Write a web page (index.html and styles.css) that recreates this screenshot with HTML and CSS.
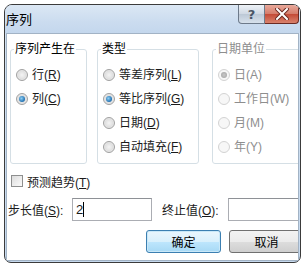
FILE: index.html
```html
<!DOCTYPE html>
<html lang="zh-CN">
<head>
    <meta charset="UTF-8">
    <title>序列</title>
    <link rel="stylesheet" href="styles.css">
</head>
<body>
    <div class="window">
        <div class="titlebar">
            <div class="title">序列</div>
            <div class="caption-buttons">
                <div class="caption help">?</div>
                <div class="caption close">
                    <svg width="14" height="12" viewBox="0 0 14 12">
                        <path d="M2 1 L12 11 M12 1 L2 11" stroke="#6b2a22" stroke-width="4" stroke-linecap="square"/>
                        <path d="M2 1 L12 11 M12 1 L2 11" stroke="#fff" stroke-width="2" stroke-linecap="square"/>
                    </svg>
                </div>
            </div>
        </div>
        <div class="content">
            <div class="groups">
                <fieldset class="group group-source">
                    <legend>序列产生在</legend>
                    <label class="option"><span class="radio"></span><span>行(<u>R</u>)</span></label>
                    <label class="option"><span class="radio checked"></span><span>列(<u>C</u>)</span></label>
                </fieldset>
                <fieldset class="group group-type">
                    <legend>类型</legend>
                    <label class="option"><span class="radio"></span><span>等差序列(<u>L</u>)</span></label>
                    <label class="option"><span class="radio checked"></span><span>等比序列(<u>G</u>)</span></label>
                    <label class="option"><span class="radio"></span><span>日期(<u>D</u>)</span></label>
                    <label class="option"><span class="radio"></span><span>自动填充(<u>F</u>)</span></label>
                </fieldset>
                <fieldset class="group group-date disabled">
                    <legend>日期单位</legend>
                    <label class="option"><span class="radio checked"></span><span>日(A)</span></label>
                    <label class="option"><span class="radio"></span><span>工作日(W)</span></label>
                    <label class="option"><span class="radio"></span><span>月(M)</span></label>
                    <label class="option"><span class="radio"></span><span>年(Y)</span></label>
                </fieldset>
            </div>
            <label class="trend"><span class="checkbox"></span><span>预测趋势(<u>T</u>)</span></label>
            <div class="values">
                <span class="field-label">步长值(<u>S</u>):</span>
                <div class="input step"><span>2</span><span class="caret"></span></div>
                <span class="field-label end-label">终止值(<u>O</u>):</span>
                <div class="input stop"></div>
            </div>
            <div class="actions">
                <button class="btn default">确定</button>
                <button class="btn">取消</button>
            </div>
        </div>
    </div>
</body>
</html>
```

FILE: styles.css
```css
body {
    margin: 0;
    background-color: #fff;
    font-family: "Liberation Sans", "Noto Sans CJK SC", sans-serif;
    font-size: 12px;
    color: #1a1a1a;
}

.window {
    box-sizing: border-box;
    width: 297px;
    height: 259px;
    margin: 4px 0 0 4px;
    border: 1px solid #3b3b3b;
    border-radius: 8px 8px 7px 7px;
    background: linear-gradient(to bottom, #d3e2f2, #c6d9ee);
    overflow: hidden;
    display: flex;
    flex-direction: column;
}

.titlebar {
    height: 28px;
    display: flex;
    background: linear-gradient(to bottom, #dbe7f4 0%, #cbdcef 60%, #c4d7ed 100%);
}

.title {
    margin-left: 1px;
    padding-top: 6px;
    font-family: "Noto Sans CJK SC", sans-serif;
    font-size: 13px;
    line-height: 16px;
    color: #000;
}

.caption-buttons {
    margin-left: auto;
    margin-right: 1px;
    display: flex;
    align-self: flex-start;
}

.caption {
    box-sizing: border-box;
    height: 19px;
    display: flex;
    align-items: center;
    justify-content: center;
    border: 1px solid #6d7a8a;
    border-top: none;
}

.help {
    width: 27px;
    border-radius: 0 0 0 4px;
    background: linear-gradient(to bottom, #eef2f7, #cfd8e3 50%, #bcc8d6 51%, #d7e1ec);
    color: #4a5566;
    font-family: "DejaVu Sans", sans-serif;
    font-size: 13px;
    font-weight: bold;
}

.close {
    width: 34px;
    border-left: none;
    border-color: #6b2a22;
    border-radius: 0 0 4px 0;
    background: linear-gradient(to bottom, #e9a99b, #d47b69 50%, #c44a36 51%, #d9826c);
}

.content {
    flex: 1;
    margin: 0 1px 1px;
    background-color: #fff;
    border: 1px solid #a2b3c5;
    overflow: hidden;
}

.groups {
    display: flex;
    margin: 8px 0 0 3px;
}

.group {
    box-sizing: border-box;
    flex-shrink: 0;
    height: 122px;
    margin: 0;
    padding: 12px 0 0 5px;
    border: 1px solid #d5dfe5;
    border-radius: 3px;
    display: flex;
    flex-direction: column;
    gap: 10px;
}

.group legend {
    padding: 0 1px;
    margin-left: -2px;
    line-height: 14px;
    white-space: nowrap;
    color: #000;
}

.group-source {
    width: 77px;
}

.group-type {
    width: 102px;
    margin-left: 10px;
}

.group-date {
    width: 110px;
    margin-left: 13px;
}

.option {
    display: flex;
    align-items: center;
    gap: 4px;
    height: 14px;
    line-height: 14px;
    white-space: nowrap;
}

.disabled legend,
.disabled .option {
    color: #8e8e8e;
}

.radio {
    box-sizing: border-box;
    width: 12px;
    height: 12px;
    border-radius: 50%;
    border: 1px solid #a0a0a0;
    background: radial-gradient(circle at 50% 50%, #f4f4f4 0, #e0e0e0 55%, #fafafa 100%);
    position: relative;
}

.radio.checked::after {
    content: "";
    position: absolute;
    left: 2px;
    top: 2px;
    width: 6px;
    height: 6px;
    border-radius: 50%;
    background: radial-gradient(circle at 40% 40%, #8fd0f5, #1f6fb0 70%, #18518a);
}

.disabled .radio {
    border-color: #d3d3d3;
    background: #f7f7f7;
}

.disabled .radio.checked::after {
    background: radial-gradient(circle, #c8c8c8, #a0a0a0);
}

.trend {
    display: flex;
    align-items: center;
    gap: 4px;
    margin: 10px 0 0 4px;
    height: 14px;
}

.checkbox {
    box-sizing: border-box;
    width: 12px;
    height: 12px;
    border: 1px solid #8e8f8f;
    background: linear-gradient(135deg, #dcdcdc, #fbfbfb);
}

.values {
    display: flex;
    align-items: center;
    margin: 10px 0 0 1px;
    height: 23px;
}

.field-label {
    flex-shrink: 0;
    white-space: nowrap;
    width: 64px;
}

.input {
    box-sizing: border-box;
    flex-shrink: 0;
    width: 80px;
    height: 23px;
    border: 1px solid #abadb3;
    border-top-color: #8e9196;
    background-color: #fff;
    padding: 0 3px;
    font-family: "Liberation Sans", sans-serif;
    font-size: 13px;
    display: flex;
    align-items: center;
}

.caret {
    width: 1px;
    height: 15px;
    background-color: #000;
}

.end-label {
    width: 66px;
    margin-left: 10px;
}

.actions {
    display: flex;
    gap: 8px;
    margin: 9px 0 0 139px;
}

.btn {
    box-sizing: border-box;
    width: 75px;
    height: 23px;
    flex-shrink: 0;
    border: 1px solid #707070;
    border-radius: 3px;
    background: linear-gradient(to bottom, #f2f2f2 0%, #ebebeb 50%, #dddddd 51%, #cfcfcf 100%);
    font-family: "Noto Sans CJK SC", sans-serif;
    font-size: 12px;
    color: #000;
    padding: 0;
}

.btn.default {
    border-color: #3c7fb1;
    box-shadow: inset 0 0 0 1px #c9e8f8;
    background: linear-gradient(to bottom, #eaf6fd 0%, #d9f0fc 50%, #bee6fd 51%, #a7d9f5 100%);
}
```
